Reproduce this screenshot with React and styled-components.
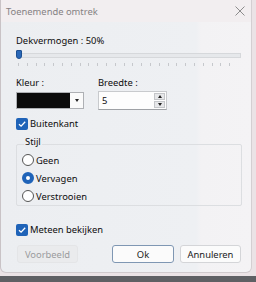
import React from 'react'
import styled, { createGlobalStyle } from 'styled-components'

const Global = createGlobalStyle`
  html, body {
    margin: 0;
    padding: 0;
    background: #e9e1e4;
    font-family: "Noto Sans", "Open Sans", sans-serif;
  }
`

const Backdrop = styled.div`
  width: 256px;
  height: 282px;
  overflow: hidden;
  background: #ebe3e6;
  display: flex;
  flex-direction: column;
`

const Dialog = styled.div`
  width: 252px;
  height: 273px;
  box-sizing: border-box;
  border-left: 1px solid #c9c3c6;
  border-right: 1px solid #d4cfd2;
  border-bottom: 1px solid #d0cacd;
  border-radius: 0 0 6px 6px;
  background: linear-gradient(90deg, #eceef1 0%, #eef0f3 78%, #f3f2f4 80%, #f4f3f5 100%);
  display: flex;
  flex-direction: column;
`

const Taskbar = styled.div`
  margin-top: auto;
  height: 6px;
  background: #5f6064;
`

const TitleBar = styled.div`
  height: 22px;
  display: flex;
  align-items: center;
  justify-content: space-between;
  padding: 0 6px 0 5px;
  background: #f2eef0;
  color: #858183;
  font-size: 9.4px;
`

const Close = styled.svg`
  width: 10px;
  height: 10px;
  stroke: #8c8c8c;
  stroke-width: 1;
`

const Body = styled.div`
  flex: 1;
  display: flex;
  flex-direction: column;
  padding: 11px 9px 0 15px;
  font-size: 9.4px;
  color: #0d0d0d;
`

const Label = styled.div`
  line-height: 15px;
`

const Slider = styled.div`
  position: relative;
  margin-top: 2px;
  height: 18px;
  width: 225px;
`

const Track = styled.div`
  position: absolute;
  left: 0;
  right: 0;
  top: 3px;
  height: 3px;
  background: #e6e8eb;
  border: 1px solid #d6d8db;
`

const Thumb = styled.div`
  position: absolute;
  left: 0;
  top: 0;
  width: 4px;
  height: 7px;
  background: #2a68b8;
  border: 1px solid #1c4f91;
  border-radius: 1px 1px 3px 3px;
`

const Ticks = styled.div`
  position: absolute;
  left: 2px;
  right: 3px;
  top: 13px;
  height: 3px;
  background: repeating-linear-gradient(90deg, #c6c8cc 0 1px, transparent 1px 8.8px);
`

const Row = styled.div`
  display: flex;
  gap: 14px;
  margin-top: 7px;
`

const Field = styled.div`
  display: flex;
  flex-direction: column;
  gap: 2px;
`

const Combo = styled.div`
  width: 66px;
  height: 15px;
  display: flex;
  border: 1px solid #aeb0b4;
  background: #fafafa;
`

const Swatch = styled.div`
  flex: 1;
  background: #0b0b0b;
`

const Arrow = styled.div`
  width: 13px;
  display: flex;
  align-items: center;
  justify-content: center;
  &::after {
    content: '';
    border-left: 2.5px solid transparent;
    border-right: 2.5px solid transparent;
    border-top: 3px solid #222;
  }
`

const Spin = styled.div`
  width: 67px;
  height: 17px;
  margin-top: -1px;
  display: flex;
  border: 1px solid #c8cacd;
  border-bottom-color: #9ea1a5;
  background: #fdfdfd;
`

const SpinValue = styled.div`
  flex: 1;
  padding-left: 3px;
  line-height: 17px;
`

const SpinButtons = styled.div`
  width: 11px;
  display: flex;
  flex-direction: column;
  gap: 1px;
  padding: 1px 1px 1px 0;
`

const SpinBtn = styled.div`
  flex: 1;
  background: #e6e7e9;
  border: 1px solid #c4c6c9;
  display: flex;
  align-items: center;
  justify-content: center;
  &::after {
    content: '';
    border-left: 2px solid transparent;
    border-right: 2px solid transparent;
    ${p => (p.$up ? 'border-bottom: 3px solid #222;' : 'border-top: 3px solid #222;')}
  }
`

const Check = styled.div`
  display: flex;
  align-items: center;
  gap: 2px;
  height: 15px;
  margin-top: ${p => p.$mt}px;
`

const Box = styled.div`
  width: 12px;
  height: 12px;
  border-radius: 2px;
  background: #1f63b8;
  display: flex;
  align-items: center;
  justify-content: center;
`

const Group = styled.div`
  position: relative;
  margin-top: 13px;
  width: 226px;
  height: 62px;
  border: 1px solid #dcdee1;
  border-radius: 2px;
  padding: 8px 0 0 5px;
  box-sizing: border-box;
  display: flex;
  flex-direction: column;
  gap: 4px;
`

const Legend = styled.div`
  position: absolute;
  top: -11px;
  left: 7px;
  padding: 0 1px;
  background: #eceef1;
  line-height: 15px;
`

const Radio = styled.div`
  display: flex;
  align-items: center;
  gap: 2px;
  height: 14px;
`

const Dot = styled.div`
  width: 12px;
  height: 12px;
  border-radius: 50%;
  box-sizing: border-box;
  border: ${p => (p.$on ? '4px solid #1f63b8' : '1px solid #555')};
  background: #fff;
`

const Buttons = styled.div`
  display: flex;
  margin-top: 8px;
`

const Button = styled.div`
  width: ${p => p.$w}px;
  height: 18px;
  box-sizing: border-box;
  display: flex;
  align-items: center;
  justify-content: center;
  margin-left: ${p => p.$ml}px;
  border-radius: 3px;
  background: ${p => (p.$disabled ? '#eaebed' : '#fbfbfb')};
  color: ${p => (p.$disabled ? '#9a9b9d' : '#1a1a1a')};
  border: 1px solid ${p => (p.$disabled ? '#e4e5e7' : p.$primary ? '#7f97b3' : '#d4d5d8')};
  font-size: 9.4px;
`

const Tick = () => (
  <svg width="10" height="10" viewBox="0 0 10 10">
    <path d="M2 5.2 L4.1 7.2 L8.2 2.8" fill="none" stroke="#fff" strokeWidth="1.3" />
  </svg>
)

export default function App() {
  return (
    <Backdrop>
      <Global />
      <Dialog>
        <TitleBar>
          <span>Toenemende omtrek</span>
          <Close viewBox="0 0 10 10">
            <path d="M0.5 0.5 L9.5 9.5 M9.5 0.5 L0.5 9.5" />
          </Close>
        </TitleBar>
        <Body>
          <Label>Dekvermogen : 50%</Label>
          <Slider>
            <Track />
            <Thumb />
            <Ticks />
          </Slider>
          <Row>
            <Field>
              <Label>Kleur :</Label>
              <Combo>
                <Swatch />
                <Arrow />
              </Combo>
            </Field>
            <Field>
              <Label>Breedte :</Label>
              <Spin>
                <SpinValue>5</SpinValue>
                <SpinButtons>
                  <SpinBtn $up />
                  <SpinBtn />
                </SpinButtons>
              </Spin>
            </Field>
          </Row>
          <Check $mt={6}>
            <Box><Tick /></Box>
            <span>Buitenkant</span>
          </Check>
          <Group>
            <Legend>Stijl</Legend>
            <Radio><Dot /><span>Geen</span></Radio>
            <Radio><Dot $on /><span>Vervagen</span></Radio>
            <Radio><Dot /><span>Verstrooien</span></Radio>
          </Group>
          <Check $mt={16}>
            <Box><Tick /></Box>
            <span>Meteen bekijken</span>
          </Check>
          <Buttons>
            <Button $w={61} $ml={1} $disabled>Voorbeeld</Button>
            <Button $w={62} $ml={34} $primary>Ok</Button>
            <Button $w={61} $ml={6}>Annuleren</Button>
          </Buttons>
        </Body>
      </Dialog>
      <Taskbar />
    </Backdrop>
  )
}
